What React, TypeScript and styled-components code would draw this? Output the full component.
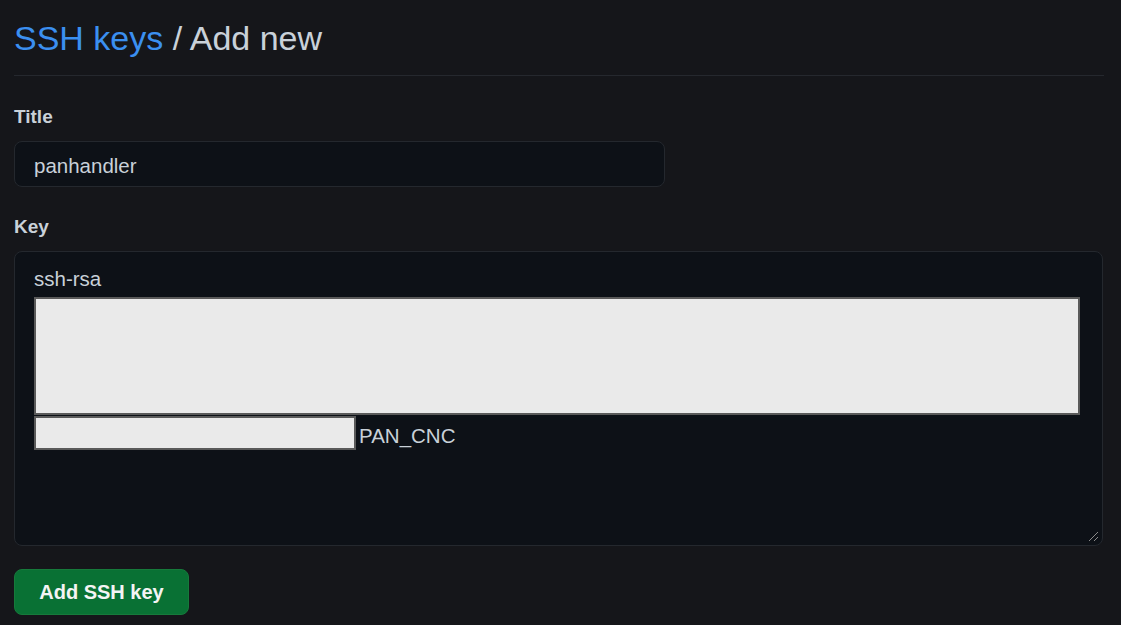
import React from "react";
import styled, { createGlobalStyle } from "styled-components";

const GlobalStyle = createGlobalStyle`
  html, body {
    margin: 0;
    padding: 0;
    background: #15161a;
  }
  body {
    font-family: "Liberation Sans", Arial, sans-serif;
    color: #c9d1d9;
  }
`;

const Page = styled.div`
  padding: 18px 18px 0 14px;
  min-height: 625px;
  box-sizing: border-box;
`;

const Header = styled.div`
  padding-bottom: 17px;
  border-bottom: 1px solid #25282e;
  margin-right: -1px;
`;

const Heading = styled.h1`
  margin: 0;
  font-size: 34px;
  line-height: 40px;
  font-weight: 400;
  color: #c9d1d9;
`;

const Crumb = styled.a`
  color: #3b8ff0;
  text-decoration: none;
`;

const Field = styled.div<{ top: number }>`
  margin-top: ${(p) => p.top}px;
  display: flex;
  flex-direction: column;
  gap: 12px;
`;

const Label = styled.label`
  font-size: 19px;
  line-height: 24px;
  font-weight: 700;
  color: #c9d1d9;
`;

const TitleInput = styled.div`
  width: 651px;
  height: 46px;
  box-sizing: border-box;
  display: flex;
  align-items: center;
  padding: 3px 0 0 19px;
  background: #0d1117;
  border: 1px solid #24282e;
  border-radius: 8px;
  font-size: 20.5px;
  color: #c9d1d9;
`;

const KeyArea = styled.div`
  position: relative;
  width: 1089px;
  height: 295px;
  box-sizing: border-box;
  padding: 15px 19px 0;
  background: #0d1117;
  border: 1px solid #24282e;
  border-radius: 8px;
  font-size: 20.5px;
  line-height: 24px;
  color: #c9d1d9;
`;

const KeyLine = styled.div`
  margin-bottom: 6px;
`;

const Redact = styled.div<{ w: number; h: number }>`
  width: ${(p) => p.w}px;
  height: ${(p) => p.h}px;
  box-sizing: border-box;
  background: #eaeaea;
  border: 2px solid #5a5a5a;
  flex-shrink: 0;
`;

const CommentRow = styled.div`
  display: flex;
  align-items: center;
  gap: 3px;
  margin-top: 1px;
`;

const Comment = styled.span`
  margin-top: 5px;
  color: #c9d1d9;
`;

const Grip = styled.svg`
  position: absolute;
  right: 2px;
  bottom: 2px;
`;

const SubmitButton = styled.button`
  margin-top: 23px;
  width: 175px;
  height: 46px;
  border-radius: 8px;
  border: 1px solid #167a3b;
  background: #097134;
  color: #f4f4f4;
  font-family: "Liberation Sans", Arial, sans-serif;
  font-size: 20px;
  font-weight: 700;
  cursor: pointer;
`;

export default function App(): React.ReactElement {
  return (
    <>
      <GlobalStyle />
      <Page>
        <Header>
          <Heading>
            <Crumb href="#">SSH keys</Crumb> / Add new
          </Heading>
        </Header>

        <Field top={29}>
          <Label>Title</Label>
          <TitleInput>panhandler</TitleInput>
        </Field>

        <Field top={28}>
          <Label>Key</Label>
          <KeyArea>
            <KeyLine>ssh-rsa</KeyLine>
            <Redact w={1046} h={118} />
            <CommentRow>
              <Redact w={322} h={34} />
              <Comment>PAN_CNC</Comment>
            </CommentRow>
            <Grip width="12" height="12" viewBox="0 0 12 12">
              <line x1="1" y1="10" x2="10" y2="1" stroke="#8a8a8a" strokeWidth="1" />
              <line x1="6" y1="10" x2="10" y2="6" stroke="#8a8a8a" strokeWidth="1" />
            </Grip>
          </KeyArea>
        </Field>

        <SubmitButton>Add SSH key</SubmitButton>
      </Page>
    </>
  );
}
